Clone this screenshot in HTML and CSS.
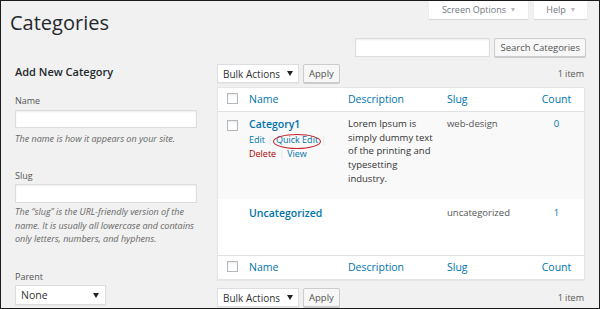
FILE: index.html
```html
<!DOCTYPE html>
<html lang="en">
<head>
<meta charset="utf-8">
<title>Categories</title>
<link rel="stylesheet" href="styles.css">
</head>
<body>
<div class="page">
  <div class="header">
    <h1 class="title">Categories</h1>
    <div class="tabs">
      <div class="tab tab-screen">Screen Options <span class="caret caret-light"></span></div>
      <div class="tab tab-help">Help <span class="caret caret-light"></span></div>
    </div>
  </div>

  <div class="search">
    <div class="input search-input"></div>
    <div class="button">Search Categories</div>
  </div>

  <div class="main">
    <div class="left">
      <h2 class="form-title">Add New Category</h2>
      <div class="label label-name">Name</div>
      <div class="input field-input input-name"></div>
      <p class="help help-name">The name is how it appears on your site.</p>
      <div class="label label-slug">Slug</div>
      <div class="input field-input input-slug"></div>
      <p class="help help-slug">The “slug” is the URL-friendly version of the<br>name. It is usually all lowercase and contains<br>only letters, numbers, and hyphens.</p>
      <div class="label label-parent">Parent</div>
      <div class="select select-parent"><span>None</span><span class="caret"></span></div>
    </div>

    <div class="right">
      <div class="tablenav tablenav-top">
        <div class="select select-bulk"><span>Bulk Actions</span><span class="caret"></span></div>
        <div class="button">Apply</div>
        <div class="count-items">1 item</div>
      </div>

      <table class="table">
        <colgroup>
          <col class="c-cb"><col class="c-name"><col class="c-desc"><col class="c-slug"><col class="c-count">
        </colgroup>
        <thead>
          <tr>
            <th class="cb"><span class="checkbox"></span></th>
            <th>Name</th>
            <th>Description</th>
            <th>Slug</th>
            <th class="num">Count</th>
          </tr>
        </thead>
        <tbody>
          <tr class="row1">
            <td class="cb"><span class="checkbox"></span></td>
            <td>
              <div class="row-title">Category1</div>
              <div class="row-actions">
                <span class="act">Edit</span><span class="sep">|</span><span class="act quick">Quick Edit</span><span class="sep">|</span><br>
                <span class="act del">Delete</span><span class="sep">|</span><span class="act">View</span>
              </div>
            </td>
            <td class="desc">Lorem Ipsum is<br>simply dummy text<br>of the printing and<br>typesetting<br>industry.</td>
            <td class="slug">web-design</td>
            <td class="num link">0</td>
          </tr>
          <tr class="row2">
            <td class="cb"></td>
            <td><div class="row-title">Uncategorized</div></td>
            <td class="desc"></td>
            <td class="slug">uncategorized</td>
            <td class="num link">1</td>
          </tr>
        </tbody>
        <tfoot>
          <tr>
            <th class="cb"><span class="checkbox"></span></th>
            <th>Name</th>
            <th>Description</th>
            <th>Slug</th>
            <th class="num">Count</th>
          </tr>
        </tfoot>
      </table>

      <div class="tablenav tablenav-bottom">
        <div class="select select-bulk"><span>Bulk Actions</span><span class="caret"></span></div>
        <div class="button">Apply</div>
        <div class="count-items">1 item</div>
      </div>
    </div>
  </div>
</div>
</body>
</html>
```
FILE: styles.css
```css
* { box-sizing: border-box; }
html, body { margin: 0; padding: 0; background: #f1f1f1; }
body { font-family: "Open Sans", "Noto Sans", sans-serif; color: #444; }

.page {
  width: 600px;
  height: 309px;
  border: 1px solid #1b1b1b;
  background: #f1f1f1;
  overflow: hidden;
}

/* header */
.header {
  display: flex;
  justify-content: space-between;
  align-items: flex-start;
  padding: 0 12px 0 9px;
}
.title {
  margin: 9px 0 0;
  font-size: 20px;
  font-weight: 400;
  line-height: 26px;
  color: #23282d;
}
.tabs { display: flex; gap: 6px; }
.tab {
  height: 18px;
  background: #fff;
  box-shadow: 0 1px 1px rgba(0,0,0,.1);
  font-size: 9px;
  line-height: 18px;
  color: #72777c;
  display: flex;
  align-items: center;
  justify-content: center;
  gap: 5px;
}
.tab-screen { width: 99px; }
.tab-help { width: 53px; }

.caret {
  display: inline-block;
  width: 0;
  height: 0;
  border-left: 3px solid transparent;
  border-right: 3px solid transparent;
  border-top: 5px solid #222;
}
.caret-light { border-top-color: #b4b9be; border-left-width: 2.5px; border-right-width: 2.5px; border-top-width: 4px; }

/* search */
.search {
  display: flex;
  justify-content: flex-end;
  gap: 4px;
  padding-right: 13px;
  margin-top: 2px;
}
.input {
  background: #fff;
  border: 1px solid #ddd;
  box-shadow: inset 0 1px 2px rgba(0,0,0,.07);
}
.search-input { width: 135px; height: 19px; }

.button {
  height: 19px;
  padding: 0 5px;
  border: 1px solid #ccc;
  border-radius: 2px;
  background: #f7f7f7;
  box-shadow: 0 1px 0 #ccc;
  color: #555;
  font-size: 9.5px;
  line-height: 17px;
  white-space: nowrap;
}

/* main */
.main {
  display: flex;
  gap: 20px;
  padding: 0 14px;
  margin-top: 7px;
}
.left { width: 182px; flex: none; }
.right { flex: 1; min-width: 0; }

.form-title {
  margin: 1px 0 0;
  font-size: 11px;
  line-height: 14px;
  font-weight: 600;
  color: #23282d;
}
.label {
  font-size: 9px;
  line-height: 12px;
  color: #555;
}
.label-name { margin-top: 15.5px; }
.label-slug { margin-top: 24px; }
.label-parent { margin-top: 25.5px; }
.field-input { width: 182px; }
.input-name { height: 18px; margin-top: 3.5px; }
.input-slug { height: 19px; margin-top: 2.5px; }

.help {
  margin: 0;
  font-size: 9px;
  font-style: italic;
  color: #666;
  white-space: nowrap;
}
.help-name { margin-top: 3.5px; line-height: 14px; }
.help-slug { margin-top: 2px; line-height: 13.5px; }

.select {
  display: flex;
  align-items: center;
  justify-content: space-between;
  background: #fff;
  border: 1px solid #ddd;
  box-shadow: 0 1px 1px rgba(0,0,0,.04);
  color: #333;
  white-space: nowrap;
}
.select-parent {
  width: 91px;
  height: 20px;
  margin-top: 2px;
  padding: 0 6px 0 5px;
  font-size: 10.5px;
}
.select-bulk {
  width: 82px;
  height: 19px;
  padding: 0 5px 0 5px;
  font-size: 10px;
}

/* table nav */
.tablenav {
  display: flex;
  align-items: center;
  gap: 4px;
  height: 19px;
}
.tablenav-top { margin-bottom: 4px; }
.tablenav-bottom { margin-top: 8px; }
.count-items {
  margin-left: auto;
  font-size: 9px;
  color: #555;
  padding-right: 1px;
}

/* table */
.table {
  width: 100%;
  table-layout: fixed;
  border-collapse: separate;
  border-spacing: 0;
  background: #fff;
  border: 1px solid #e5e5e5;
  box-shadow: 0 1px 1px rgba(0,0,0,.04);
}
.c-cb { width: 24px; }
.c-name { width: 99px; }
.c-desc { width: 99px; }
.c-slug { width: 89px; }

.table th, .table td {
  vertical-align: top;
  text-align: left;
}
.table th {
  font-weight: 400;
  font-size: 10.5px;
  line-height: 14px;
  padding: 4px 7px 5px;
  color: #0073aa;
}
.table thead th { border-bottom: 1px solid #e1e1e1; }
.table tfoot th { border-top: 1px solid #e1e1e1; }
.table th.cb, .table td.cb { padding-left: 9px; padding-right: 0; }
.table .num { text-align: center; }

.checkbox {
  display: block;
  width: 11px;
  height: 11px;
  margin-top: 1px;
  background: #fff;
  border: 1px solid #b4b9be;
  box-shadow: inset 0 1px 2px rgba(0,0,0,.1);
}

.table td {
  font-size: 9.5px;
  line-height: 13.7px;
  color: #444;
}
.row1 td {
  background: #f9f9f9;
  padding: 5px 7px 13.5px;
}
.row1 .checkbox { margin-top: 2.5px; }
.row2 td {
  background: #fff;
  padding: 6.5px 7px 35.5px;
}
.row-title {
  font-size: 10.5px;
  line-height: 14px;
  font-weight: 600;
  color: #0073aa;
  white-space: nowrap;
}
.row-actions {
  margin-top: 2px;
  font-size: 9px;
  line-height: 13.5px;
  white-space: nowrap;
  color: #0073aa;
}
.act { position: relative; }
.act.del { color: #a00; }
.sep { color: #ddd; margin: 0 3px; }
.quick::after {
  content: "";
  position: absolute;
  left: -3px;
  right: -3px;
  top: 1px;
  bottom: -3px;
  border: 1.5px solid #c4242c;
  border-radius: 50%;
}
.table td.desc { color: #333; white-space: nowrap; }
.table td.slug { color: #555; }
.table td.link { color: #0073aa; }
```
